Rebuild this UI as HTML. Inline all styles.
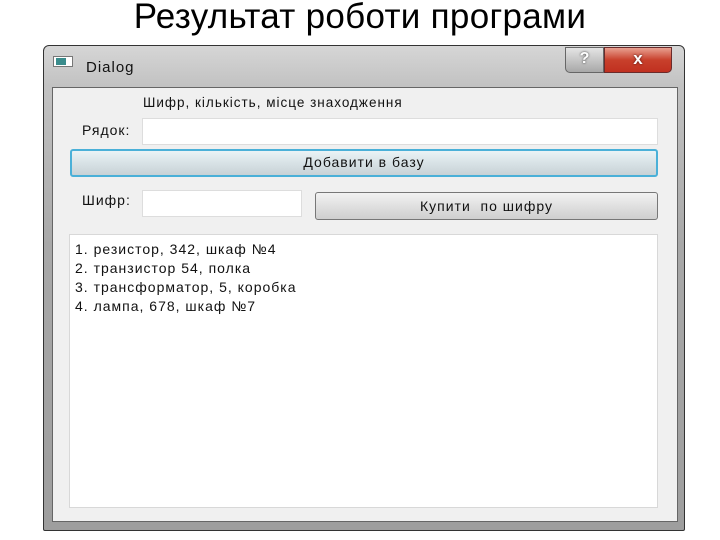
<!DOCTYPE html>
<html><head><meta charset="utf-8"><style>
*{margin:0;padding:0;box-sizing:border-box}
body{width:720px;height:540px;background:#fff;position:relative;overflow:hidden;font-family:"Liberation Sans","DejaVu Sans",sans-serif}
.a{position:absolute}
.t{font-size:14px;color:#111;white-space:nowrap;letter-spacing:1px}
</style></head><body>
<div class="a" style="left:0;top:-3px;width:720px;text-align:center;font-size:35px;color:#000;letter-spacing:0.3px">Результат роботи програми</div>
<div class="a" style="left:43px;top:45px;width:642px;height:486px;border:1px solid #333;border-radius:6px 6px 2px 2px;background:linear-gradient(#d6d6d6,#c2c2c2 40px,#a8a8a8 200px,#9e9e9e)"></div>
<div class="a" style="left:53px;top:56px;width:20px;height:11px;background:#fff;border:1px solid #777"><div style="margin:1px 2px;width:10px;height:7px;background:#3a8c8c"></div></div>
<div class="a t" style="left:86px;top:59px;font-size:15px">Dialog</div>
<div class="a" style="left:565px;top:47px;width:39px;height:26px;border:1px solid #666;border-radius:0 0 0 5px;background:linear-gradient(#e4e4e4,#a8a8a8);color:#fff;font-weight:bold;text-align:center;font-size:16px;line-height:22px;text-shadow:0 0 2px #333">?</div>
<div class="a" style="left:604px;top:47px;width:68px;height:26px;border:1px solid #6a2b2b;border-radius:0 0 5px 0;background:linear-gradient(#e8a090,#c8402c 50%,#c03020);color:#fff;font-weight:bold;text-align:center;font-size:17px;line-height:22px;text-shadow:0 0 2px #411">x</div>
<div class="a" style="left:52px;top:87px;width:626px;height:435px;background:#f0f0f0;border:1px solid #666"></div>
<div class="a t" style="left:143px;top:95px;font-size:13.5px">Шифр, кількість, місце знаходження</div>
<div class="a t" style="left:82px;top:122px">Рядок:</div>
<div class="a" style="left:142px;top:118px;width:516px;height:27px;background:#fff;border:1px solid #ddd"></div>
<div class="a t" style="left:70px;top:149px;width:588px;height:28px;border:2px solid #4ab0d8;border-radius:3px;background:linear-gradient(#eaf3f6,#d8e2e6 50%,#c8d2d6);text-align:center;line-height:23px">Добавити в базу</div>
<div class="a t" style="left:82px;top:192px">Шифр:</div>
<div class="a" style="left:142px;top:190px;width:160px;height:27px;background:#fff;border:1px solid #ddd"></div>
<div class="a t" style="left:315px;top:192px;width:343px;height:28px;border:1px solid #777;border-radius:3px;background:linear-gradient(#f2f2f2,#e0e0e0 50%,#cfcfcf);text-align:center;line-height:26px">Купити&nbsp; по шифру</div>
<div class="a" style="left:69px;top:234px;width:589px;height:274px;background:#fff;border:1px solid #d8d8d8"></div>
<div class="a t" style="left:75px;top:240px;line-height:19px">1. резистор, 342, шкаф №4<br>2. транзистор 54, полка<br>3. трансформатор, 5, коробка<br>4. лампа, 678, шкаф №7</div>
</body></html>
